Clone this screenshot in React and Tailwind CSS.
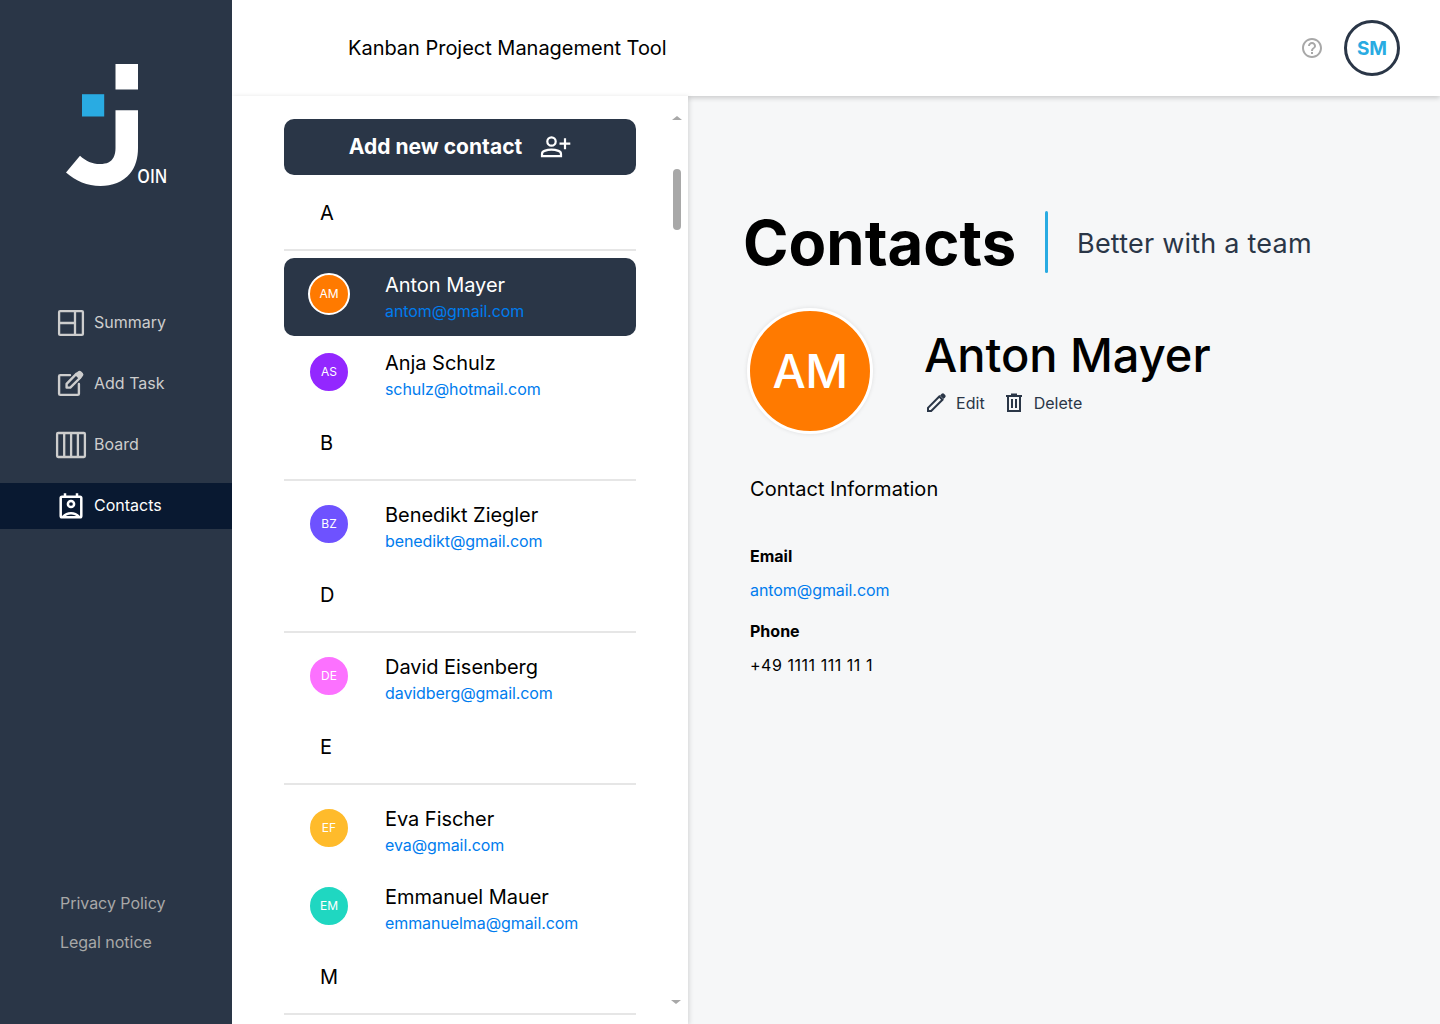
import React from "react";
import { MdHelpOutline } from "react-icons/md";

const groups = [
  {
    letter: "A",
    people: [
      { initials: "AM", name: "Anton Mayer", email: "antom@gmail.com", color: "bg-[#ff7a00]", active: true },
      { initials: "AS", name: "Anja Schulz", email: "schulz@hotmail.com", color: "bg-[#9327ff]" },
    ],
  },
  { letter: "B", people: [{ initials: "BZ", name: "Benedikt Ziegler", email: "benedikt@gmail.com", color: "bg-[#6e52ff]" }] },
  { letter: "D", people: [{ initials: "DE", name: "David Eisenberg", email: "davidberg@gmail.com", color: "bg-[#fc71ff]" }] },
  {
    letter: "E",
    people: [
      { initials: "EF", name: "Eva Fischer", email: "eva@gmail.com", color: "bg-[#ffbb2b]" },
      { initials: "EM", name: "Emmanuel Mauer", email: "emmanuelma@gmail.com", color: "bg-[#1fd7c1]" },
    ],
  },
  { letter: "M", people: [] },
];

function Logo() {
  return (
    <svg className="ml-[66px] mt-16 h-[130px] w-[120px] shrink-0 overflow-visible" viewBox="66 64 120 130">
      <path fill="#fff" d="M115.5 64H138V89.5H115.5Z" />
      <path fill="#29abe2" d="M82 94.2H104.2V116.5H82Z" />
      <path
        fill="#fff"
        d="M115.5 110.2H138V148C138 158 135.5 167 130 173.5C123 182 112 186 100.500 186C87 186 76 181 66 172.500L80 155.700C86 161 92 164 100 164C107 164 111 162 113.500 157.500C115 154.500 115.500 151.500 115.500 148Z"
      />
      <text x="137.300" y="182.800" fill="#fff" fontFamily="Open Sans, sans-serif" fontWeight="600" fontSize="20" textLength="30" lengthAdjust="spacingAndGlyphs">
        OIN
      </text>
    </svg>
  );
}

function SummaryIcon() {
  return (
    <svg className="h-8 w-8" viewBox="55 307 32 32" fill="none" stroke="currentColor" strokeWidth="2.300">
      <rect x="59.100" y="311.100" width="23.800" height="23.800" rx="1" />
      <path d="M75 311V335M59 323H75" />
    </svg>
  );
}

function AddTaskIcon() {
  return (
    <svg className="h-8 w-8" viewBox="55 368 32 32" fill="none" stroke="currentColor" strokeWidth="2.400" strokeLinecap="round" strokeLinejoin="round">
      <path d="M70 375.100H60.300Q59.100 375.100 59.100 376.300V393.700Q59.100 394.900 60.300 394.900H77.700Q78.900 394.900 78.900 393.700V384" />
      <path d="M66.600 387.600V383.800L76.600 373.700L80.400 377.500L70.300 387.600Z" />
      <path d="M75.800 374.600L78.400 372Q79.500 371.100 80.700 372L82.200 373.500Q83.200 374.700 82.200 375.800L79.600 378.400Z" fill="currentColor" strokeWidth="1.500" />
    </svg>
  );
}

function BoardIcon() {
  return (
    <svg className="h-8 w-8" viewBox="55 429 32 32" fill="none" stroke="currentColor" strokeWidth="2.300">
      <rect x="57.100" y="433" width="27.800" height="24" rx="1" />
      <path d="M64.200 433V457M71.100 433V457M77.900 433V457" />
    </svg>
  );
}

function ContactsIcon() {
  return (
    <svg className="h-8 w-8" viewBox="55 490 32 32" fill="none" stroke="currentColor" strokeWidth="2.500">
      <rect x="60.700" y="496.700" width="20.600" height="20.600" rx="1.300" />
      <path d="M65 493.300V497M77 493.300V497" />
      <circle cx="71" cy="504" r="3.100" />
      <path d="M63 516.800Q66.200 513.300 71 513.300T79 516.800" />
    </svg>
  );
}

const navItems = [
  { label: "Summary", Icon: SummaryIcon },
  { label: "Add Task", Icon: AddTaskIcon },
  { label: "Board", Icon: BoardIcon },
  { label: "Contacts", Icon: ContactsIcon, active: true },
];

function Sidebar() {
  return (
    <aside className="relative z-30 flex w-[232px] shrink-0 flex-col bg-[#2a3647]">
      <Logo />
      <nav className="mt-[106px] flex flex-col gap-[15px] text-base">
        {navItems.map(({ label, Icon, active }) => (
          <a key={label} className={`flex h-[46px] items-center gap-[7px] pl-[55px] ${active ? "bg-[#091931] text-white" : "text-[#cdcdcd]"}`}>
            <Icon />
            <span className="-mt-0.5">{label}</span>
          </a>
        ))}
      </nav>
      <div className="mt-auto flex flex-col gap-[15px] pb-[70px] pl-[60px] text-base tracking-[-0.03px] text-[#a8a8a8]">
        <a>Privacy Policy</a>
        <a>Legal notice</a>
      </div>
    </aside>
  );
}

function Header() {
  return (
    <header className="relative z-10 flex h-24 shrink-0 items-center justify-between bg-white pl-[116px] pr-10 shadow-[0_2px_5px_rgba(0,0,0,0.18)]">
      <h2 className="text-xl tracking-[-0.02px]">Kanban Project Management Tool</h2>
      <div className="flex items-center gap-5">
        <MdHelpOutline className="size-6 text-[#a8a8a8]" />
        <div className="flex size-14 items-center justify-center rounded-full border-3 border-[#2a3647] pt-0.5 text-[19px] font-bold text-[#29abe2]">SM</div>
      </div>
    </header>
  );
}

function ContactRow({ person }) {
  return (
    <div className={`flex h-[78px] rounded-[10px] ${person.active ? "bg-[#2a3647] text-white" : ""}`}>
      <div className="flex w-[101px] shrink-0 pl-6 pt-[15px]">
        <div className={`flex size-[42px] items-center justify-center rounded-full border-2 border-white text-xs text-white ${person.color}`}>{person.initials}</div>
      </div>
      <div className="pt-[13px]">
        <div className="text-xl leading-7 tracking-[-0.04px]">{person.name}</div>
        <div className="text-base leading-6 tracking-[-0.08px] text-[#007cee]">{person.email}</div>
      </div>
    </div>
  );
}

function ContactList() {
  return (
    <section className="relative z-20 flex w-[456px] shrink-0 overflow-hidden bg-white pl-[52px] shadow-[1px_1px_5px_rgba(0,0,0,0.15)]">
      <div className="w-[352px] shrink-0 pt-[22.5px]">
        <button className="flex h-[56px] w-full items-center justify-center gap-[18px] rounded-[10px] bg-[#2a3647] text-[21px] font-bold tracking-[0.03px] text-white">
          Add new contact
          <svg className="h-[24px] w-[31px]" viewBox="540 135 31 24" fill="none" stroke="currentColor" strokeWidth="2.200">
            <circle cx="551.500" cy="141.500" r="4.200" />
            <path d="M542 156.200V154Q542 151.800 544.500 150.900Q551.500 148.500 558.500 150.900Q561 151.800 561 154V156.200Z" />
            <path d="M565 138.200V149.300M559.500 143.700H570.300" />
          </svg>
        </button>
        <div className="mt-[9.5px]">
          {groups.map((group) => (
            <div key={group.letter}>
              <div className="mb-[7px] h-[67px] border-b-2 border-[#e6e6e6] pl-9 pt-[15px] text-xl leading-7">{group.letter}</div>
              {group.people.map((person) => (
                <ContactRow key={person.email} person={person} />
              ))}
            </div>
          ))}
        </div>
      </div>
      <div className="ml-[36px] flex w-[10px] flex-col items-center pb-5 pt-5">
        <svg className="h-1 w-2.5 shrink-0" viewBox="0 0 10 4" fill="#a8a8a8"><path d="M0 4L5 0L10 4Z" /></svg>
        <div className="mt-[49px] h-[61px] w-2 shrink-0 rounded-full bg-[#a8a8a8]" />
        <svg className="mr-0.5 mt-auto h-1 w-2.5 shrink-0" viewBox="0 0 10 4" fill="#a8a8a8"><path d="M0 0L5 4L10 0Z" /></svg>
      </div>
    </section>
  );
}

function Details() {
  return (
    <section className="min-w-0 flex-1 bg-[#f6f7f8] pl-[55px] pt-[115px]">
      <div className="flex h-[62px] items-center">
        <h1 className="w-[302px] pt-0.5 text-[61.6px] font-bold leading-[62px]">Contacts</h1>
        <div className="h-[62px] w-[3px] rounded-full bg-[#29abe2]" />
        <p className="ml-[29px] pt-[4px] text-[27px] tracking-[0.22px] text-[#2a3647]">Better with a team</p>
      </div>
      <div className="mt-[35px] flex items-center pl-1">
        <div className="flex size-[126px] shrink-0 items-center justify-center rounded-full border-3 border-white bg-[#ff7a00] text-[47px] font-medium tracking-[-0.5px] text-white shadow-[0_0_4px_rgba(0,0,0,0.1)]">AM</div>
        <div className="ml-[51px]">
          <div className="text-[47px] font-medium leading-[56px] tracking-[-0.05px]">Anton Mayer</div>
          <div className="mt-[8px] flex items-center text-base leading-6 tracking-[0.03px] text-[#2a3647]">
            <svg className="h-6 w-6" viewBox="924 391 24 24" fill="none" stroke="currentColor" strokeWidth="2">
              <path d="M928 411V407.800L939.300 396.500L942.500 399.700L931.200 411Z" />
              <path d="M940 395.500L941.700 393.800Q943 392.700 944.200 393.900L945.200 394.900Q946.300 396.100 945.200 397.300L943.500 399Z" fill="currentColor" stroke="none" />
            </svg>
            <span className="ml-2">Edit</span>
            <svg className="ml-[17px] h-6 w-6" viewBox="1002 391 24 24" fill="none" stroke="currentColor" strokeWidth="2">
              <path d="M1006 396H1022M1011 394.500H1017M1008 396V411H1020V396M1012 399V408M1016 399V408" />
            </svg>
            <span className="ml-2">Delete</span>
          </div>
        </div>
      </div>
      <div className="mt-[41px] pl-[7px]">
        <h3 className="text-xl leading-7 tracking-[0.03px]">Contact Information</h3>
        <div className="mt-[41px] text-base font-bold leading-6">Email</div>
        <div className="mt-[10px] text-base leading-6 tracking-[-0.07px] text-[#007cee]">antom@gmail.com</div>
        <div className="mt-[17px] text-base font-bold leading-6">Phone</div>
        <div className="mt-[10px] text-base leading-6 tracking-[0.53px]">+49 1111 111 11 1</div>
      </div>
    </section>
  );
}

export default function App() {
  return (
    <div className="flex h-[1024px] w-[1440px] overflow-hidden bg-white font-['Inter',sans-serif] text-black">
      <Sidebar />
      <main className="flex min-w-0 flex-1 flex-col">
        <Header />
        <div className="flex min-h-0 flex-1">
          <ContactList />
          <Details />
        </div>
      </main>
    </div>
  );
}
